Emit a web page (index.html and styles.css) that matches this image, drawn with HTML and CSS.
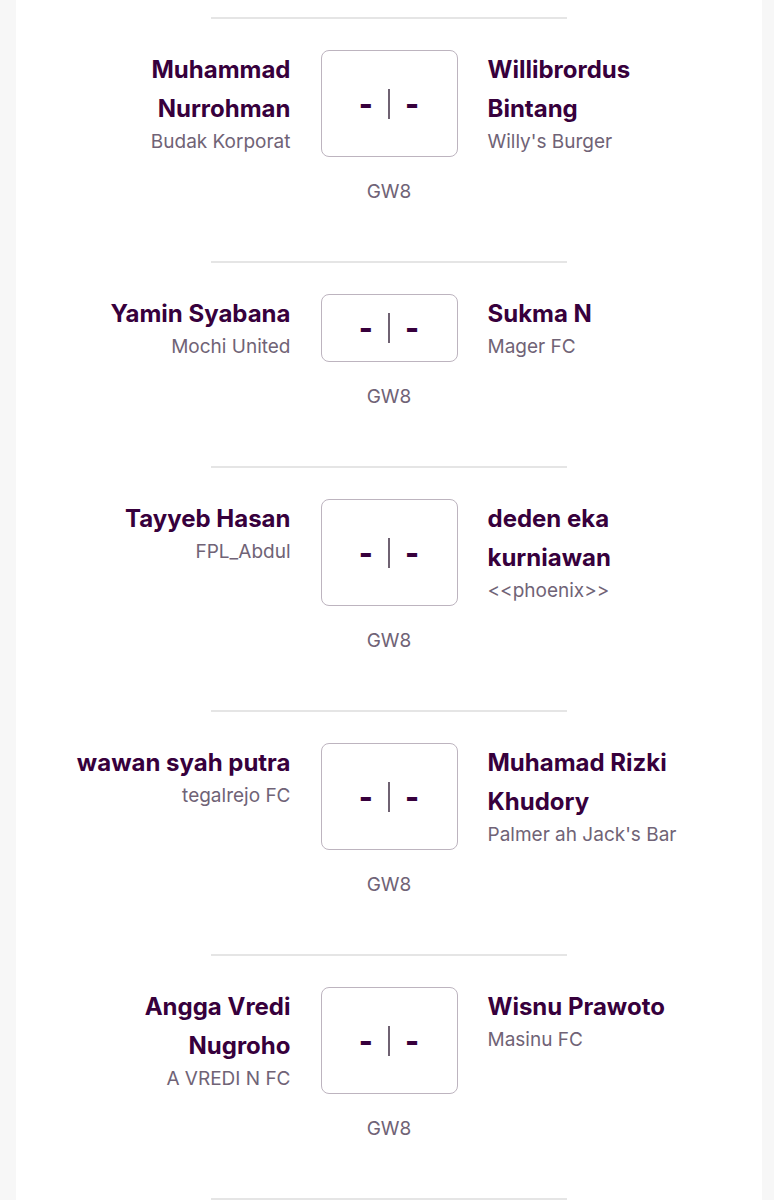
FILE: index.html
```html
<!DOCTYPE html>
<html lang="id">
<head>
<meta charset="utf-8">
<title>Fixtures GW8</title>
<link rel="stylesheet" href="styles.css">
</head>
<body>
<main class="card">
  <section class="match">
    <div class="divider"></div>
    <div class="row">
      <div class="side side-home">
        <div class="player">Muhammad Nurrohman</div>
        <div class="team">Budak Korporat</div>
      </div>
      <div class="score"><span class="dash">-</span><span class="bar"></span><span class="dash">-</span></div>
      <div class="side side-away">
        <div class="player">Willibrordus Bintang</div>
        <div class="team">Willy's Burger</div>
      </div>
    </div>
    <div class="gw">GW8</div>
  </section>

  <section class="match">
    <div class="divider"></div>
    <div class="row">
      <div class="side side-home">
        <div class="player">Yamin Syabana</div>
        <div class="team">Mochi United</div>
      </div>
      <div class="score"><span class="dash">-</span><span class="bar"></span><span class="dash">-</span></div>
      <div class="side side-away">
        <div class="player">Sukma N</div>
        <div class="team">Mager FC</div>
      </div>
    </div>
    <div class="gw">GW8</div>
  </section>

  <section class="match">
    <div class="divider"></div>
    <div class="row">
      <div class="side side-home">
        <div class="player">Tayyeb Hasan</div>
        <div class="team">FPL_Abdul</div>
      </div>
      <div class="score"><span class="dash">-</span><span class="bar"></span><span class="dash">-</span></div>
      <div class="side side-away">
        <div class="player">deden eka kurniawan</div>
        <div class="team">&lt;&lt;phoenix&gt;&gt;</div>
      </div>
    </div>
    <div class="gw">GW8</div>
  </section>

  <section class="match">
    <div class="divider"></div>
    <div class="row">
      <div class="side side-home">
        <div class="player">wawan syah putra</div>
        <div class="team">tegalrejo FC</div>
      </div>
      <div class="score"><span class="dash">-</span><span class="bar"></span><span class="dash">-</span></div>
      <div class="side side-away">
        <div class="player">Muhamad Rizki Khudory</div>
        <div class="team">Palmer ah Jack's Bar</div>
      </div>
    </div>
    <div class="gw">GW8</div>
  </section>

  <section class="match">
    <div class="divider"></div>
    <div class="row">
      <div class="side side-home">
        <div class="player">Angga Vredi Nugroho</div>
        <div class="team">A VREDI N FC</div>
      </div>
      <div class="score"><span class="dash">-</span><span class="bar"></span><span class="dash">-</span></div>
      <div class="side side-away">
        <div class="player">Wisnu Prawoto</div>
        <div class="team">Masinu FC</div>
      </div>
    </div>
    <div class="gw">GW8</div>
  </section>

  <div class="divider"></div>
</main>
</body>
</html>
```

FILE: styles.css
```css
html, body {
  margin: 0;
  padding: 0;
  background: #f7f7f7;
}

body {
  font-family: Inter, "Noto Sans", sans-serif;
  color: #37003c;
}

.card {
  margin-left: 16px;
  width: 746px;
  min-height: 1200px;
  background: #ffffff;
  padding-top: 17px;
  box-sizing: border-box;
}

.divider {
  width: 356px;
  height: 2px;
  margin: 0 auto;
  background: #e5e5e5;
}

.row {
  display: grid;
  grid-template-columns: 1fr 137px 1fr;
  column-gap: 30px;
  padding: 0 48px;
  margin-top: 31px;
}

.side-home {
  text-align: right;
}

.side-away {
  text-align: left;
}

.player {
  font-size: 24px;
  font-weight: 700;
  line-height: 39px;
  color: #37003c;
}

.team {
  font-size: 19px;
  line-height: 29px;
  color: #706376;
  margin-top: -1px;
  padding-bottom: 1px;
}

.score {
  display: flex;
  align-items: center;
  justify-content: center;
  gap: 15px;
  border: 1px solid #bdb4bf;
  border-radius: 8px;
}

.dash {
  font-size: 30px;
  font-weight: 800;
  color: #37003c;
  line-height: 1;
}

.bar {
  width: 2px;
  height: 30px;
  background: #6f6272;
}

.gw {
  text-align: center;
  font-size: 19px;
  line-height: 26px;
  color: #706376;
  margin-top: 22px;
  margin-bottom: 56px;
}
```
